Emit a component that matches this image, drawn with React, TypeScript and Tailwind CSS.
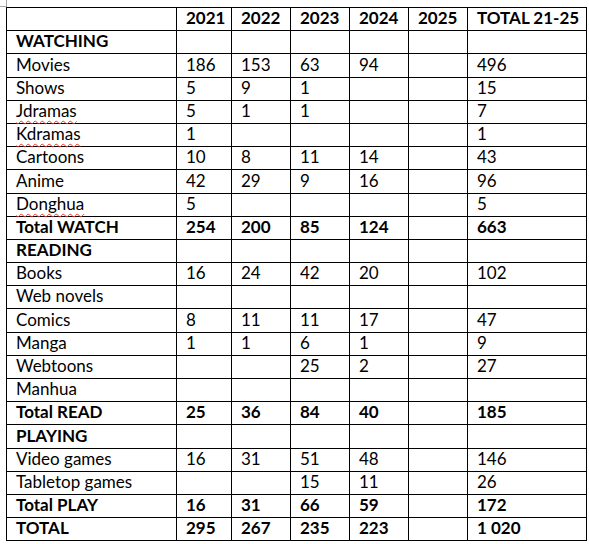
type Row = { label: string; values: string[]; bold?: boolean; misspelled?: boolean };

const YEARS = ["2021", "2022", "2023", "2024", "2025", "TOTAL 21-25"];

const ROWS: Row[] = [
  { label: "WATCHING", values: [], bold: true },
  { label: "Movies", values: ["186", "153", "63", "94", "", "496"] },
  { label: "Shows", values: ["5", "9", "1", "", "", "15"] },
  { label: "Jdramas", values: ["5", "1", "1", "", "", "7"], misspelled: true },
  { label: "Kdramas", values: ["1", "", "", "", "", "1"], misspelled: true },
  { label: "Cartoons", values: ["10", "8", "11", "14", "", "43"] },
  { label: "Anime", values: ["42", "29", "9", "16", "", "96"] },
  { label: "Donghua", values: ["5", "", "", "", "", "5"], misspelled: true },
  { label: "Total WATCH", values: ["254", "200", "85", "124", "", "663"], bold: true },
  { label: "READING", values: [], bold: true },
  { label: "Books", values: ["16", "24", "42", "20", "", "102"] },
  { label: "Web novels", values: [] },
  { label: "Comics", values: ["8", "11", "11", "17", "", "47"] },
  { label: "Manga", values: ["1", "1", "6", "1", "", "9"] },
  { label: "Webtoons", values: ["", "", "25", "2", "", "27"] },
  { label: "Manhua", values: [] },
  { label: "Total READ", values: ["25", "36", "84", "40", "", "185"], bold: true },
  { label: "PLAYING", values: [], bold: true },
  { label: "Video games", values: ["16", "31", "51", "48", "", "146"] },
  { label: "Tabletop games", values: ["", "", "15", "11", "", "26"] },
  { label: "Total PLAY", values: ["16", "31", "66", "59", "", "172"], bold: true },
  { label: "TOTAL", values: ["295", "267", "235", "223", "", "1 020"], bold: true },
];

const cell = "border border-black pl-[9px] pr-0 align-bottom pb-[2px] whitespace-nowrap";

export default function App() {
  return (
    <div
      className="relative min-h-[544px] w-[589px] bg-white pl-[6px] pt-[7px] text-[17px] leading-[20px] text-black"
      style={{ fontFamily: "Lato, 'Open Sans', sans-serif" }}
    >
      {/* word's text-boundary corner mark */}
      <div className="absolute left-0 top-0 h-[7px] w-[7px] border-b border-r border-[#a6a6a6]" />
      <table className="table-fixed border-collapse w-[580px]">
        <colgroup>
          <col className="w-[170px]" />
          <col className="w-[55px]" />
          <col className="w-[59px]" />
          <col className="w-[59px]" />
          <col className="w-[59px]" />
          <col className="w-[59px]" />
          <col className="w-[119px]" />
        </colgroup>
        <tbody>
          <tr className="h-[23.2px] font-bold">
            <td className={cell} />
            {YEARS.map((y) => (
              <td key={y} className={cell}>
                {y}
              </td>
            ))}
          </tr>
          {ROWS.map((row) => (
            <tr key={row.label} className={`h-[23.2px] ${row.bold ? "font-bold" : ""}`}>
              <td className={cell}>
                {row.misspelled ? (
                  <span className="underline decoration-wavy decoration-[#e8372f] decoration-1 underline-offset-[3px]">
                    {row.label}
                  </span>
                ) : (
                  row.label
                )}
              </td>
              {Array.from({ length: 6 }, (_, i) => (
                <td key={i} className={cell}>
                  {row.values[i] ?? ""}
                </td>
              ))}
            </tr>
          ))}
        </tbody>
      </table>
    </div>
  );
}
